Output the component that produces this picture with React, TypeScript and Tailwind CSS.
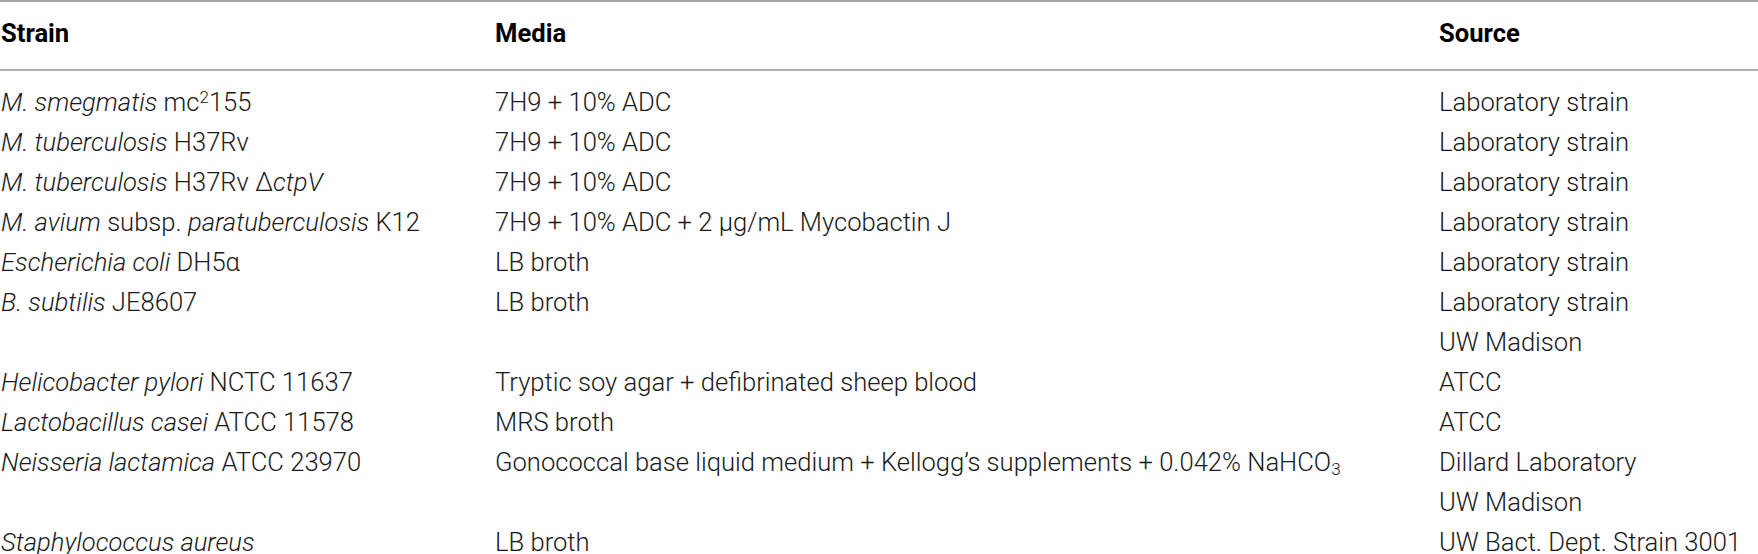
import type { ReactNode } from "react";

type Row = [ReactNode, ReactNode, ReactNode];

const rows: Row[] = [
  [
    <>
      <i>M. smegmatis</i> mc
      <span className="relative -top-[8px] text-[17px] leading-none">2</span>155
    </>,
    "7H9 + 10% ADC",
    "Laboratory strain",
  ],
  [
    <>
      <i>M. tuberculosis</i> H37Rv
    </>,
    "7H9 + 10% ADC",
    "Laboratory strain",
  ],
  [
    <>
      <i>M. tuberculosis</i> H37Rv Δ<i>ctpV</i>
    </>,
    "7H9 + 10% ADC",
    "Laboratory strain",
  ],
  [
    <>
      <i>M. avium</i> subsp. <i>paratuberculosis</i> K12
    </>,
    "7H9 + 10% ADC + 2 μg/mL Mycobactin J",
    "Laboratory strain",
  ],
  [
    <>
      <i>Escherichia coli</i> DH5α
    </>,
    "LB broth",
    "Laboratory strain",
  ],
  [
    <>
      <i>B. subtilis</i> JE8607
    </>,
    "LB broth",
    "Laboratory strain",
  ],
  ["", "", "UW Madison"],
  [
    <>
      <i>Helicobacter pylori</i> NCTC 11637
    </>,
    "Tryptic soy agar + defibrinated sheep blood",
    "ATCC",
  ],
  [
    <>
      <i>Lactobacillus casei</i> ATCC 11578
    </>,
    "MRS broth",
    "ATCC",
  ],
  [
    <>
      <i>Neisseria lactamica</i> ATCC 23970
    </>,
    <>
      Gonococcal base liquid medium + Kellogg’s supplements + 0.042% NaHCO
      <span className="relative top-[4px] text-[17px] leading-none">3</span>
    </>,
    "Dillard Laboratory",
  ],
  ["", "", "UW Madison"],
  [
    <>
      <i>Staphylococcus aureus</i>
    </>,
    "LB broth",
    "UW Bact. Dept. Strain 3001",
  ],
];

export default function App() {
  return (
    <div className="h-[554px] w-[1758px] overflow-hidden bg-white text-[#1a1a1a] font-['Roboto','Liberation_Sans',sans-serif] text-[25.6px]">
      <div className="h-[2px] bg-[#a3a3a3]" />
      <div className="grid grid-cols-[495px_944px_1fr] pt-[11px] pb-[16px] font-bold text-black leading-[40px]">
        <div className="pl-[1px]">Strain</div>
        <div>Media</div>
        <div>Source</div>
      </div>
      <div className="h-[2px] bg-[#b0b0b0]" />
      <div className="grid grid-cols-[495px_944px_1fr] pt-[11px] font-light leading-[40px]">
        {rows.map((r, i) => (
          <div key={i} className="contents">
            <div className="h-10 whitespace-nowrap pl-[1px]">{r[0]}</div>
            <div className="h-10 whitespace-nowrap">{r[1]}</div>
            <div className="h-10 whitespace-nowrap">{r[2]}</div>
          </div>
        ))}
      </div>
    </div>
  );
}
